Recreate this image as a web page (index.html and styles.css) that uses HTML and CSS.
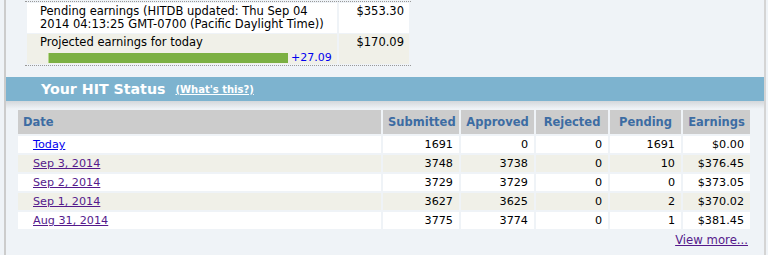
FILE: index.html
```html
<!DOCTYPE html>
<html>
<head>
  <link rel="stylesheet" href="styles.css">
</head>
<body>
  <div class="panel">
    <table class="earnings">
      <tr>
        <td class="label">Pending earnings (HITDB updated: Thu Sep 04<br>2014 04:13:25 GMT-0700 (Pacific Daylight Time))</td>
        <td class="amount">$353.30</td>
      </tr>
      <tr class="alt">
        <td class="label">
          Projected earnings for today
          <div class="progress">
            <span class="bar" style="width: 240px;"></span>
            <span class="delta">+27.09</span>
          </div>
        </td>
        <td class="amount">$170.09</td>
      </tr>
    </table>

    <div class="hit-bar">
      <span class="hit-title">Your HIT Status</span>
      <a href="#" class="hit-help">(What's this?)</a>
    </div>

    <div class="hit-body">
      <table class="status">
        <tr>
          <th class="c-date">Date</th>
          <th class="c-sub">Submitted</th>
          <th class="c-app">Approved</th>
          <th class="c-rej">Rejected</th>
          <th class="c-pen">Pending</th>
          <th class="c-earn">Earnings</th>
        </tr>
        <tr>
          <td class="date"><a href="#" class="today">Today</a></td>
          <td>1691</td><td>0</td><td>0</td><td>1691</td><td>$0.00</td>
        </tr>
        <tr class="alt">
          <td class="date"><a href="#">Sep 3, 2014</a></td>
          <td>3748</td><td>3738</td><td>0</td><td>10</td><td>$376.45</td>
        </tr>
        <tr>
          <td class="date"><a href="#">Sep 2, 2014</a></td>
          <td>3729</td><td>3729</td><td>0</td><td>0</td><td>$373.05</td>
        </tr>
        <tr class="alt">
          <td class="date"><a href="#">Sep 1, 2014</a></td>
          <td>3627</td><td>3625</td><td>0</td><td>2</td><td>$370.02</td>
        </tr>
        <tr>
          <td class="date"><a href="#">Aug 31, 2014</a></td>
          <td>3775</td><td>3774</td><td>0</td><td>1</td><td>$381.45</td>
        </tr>
      </table>
      <div class="more"><a href="#">View more...</a></div>
    </div>
  </div>
</body>
</html>
```

FILE: styles.css
```css
html, body {
  margin: 0;
  background-color: #eff3f7;
  font-family: "DejaVu Sans", Verdana, sans-serif;
  color: #000;
}
.panel {
  margin: 0 2px 0 4px;
  height: 255px;
  border-left: 2px solid #cccccc;
  border-right: 2px solid #d4d4d4;
  background-color: #eff3f7;
  overflow: hidden;
}
.earnings {
  margin: 1px 0 0 19px;
  width: 386px;
  border-collapse: separate;
  border-spacing: 2px 1px;
  border-top: 1px dotted #999;
  border-bottom: 1px dotted #999;
  font-size: 11.5px;
}
.earnings td {
  vertical-align: top;
  background-color: #ffffff;
  line-height: 13px;
  height: 30px;
  padding: 2px 5px 0 13px;
  box-sizing: border-box;
}
.earnings tr.alt td {
  background-color: #f0f0e8;
}
.earnings td.amount {
  text-align: right;
  padding-right: 5px;
  width: 75px;
}
.progress {
  display: flex;
  align-items: center;
  margin: 2px 0 0 8px;
}
.bar {
  display: block;
  height: 10px;
  background-color: #7cb042;
  border-left: 1px solid #b9d88f;
  box-sizing: border-box;
}
.delta {
  color: #0000ee;
  margin-left: 3px;
  font-size: 11px;
}
.hit-bar {
  margin: 11px -2px 0 -2px;
  height: 24px;
  background-color: #7db3cf;
  padding-left: 37px;
  display: flex;
  align-items: center;
}
.hit-title {
  color: #ffffff;
  font-weight: bold;
  font-size: 14.2px;
}
.hit-help {
  color: #ffffff;
  font-weight: bold;
  font-size: 10px;
  margin-left: 10px;
}
.hit-body {
  padding-top: 7px;
  background: linear-gradient(#d3d7db, #eff3f7 8px);
}
.status {
  margin-left: 10px;
  width: 736px;
  table-layout: fixed;
  border-collapse: separate;
  border-spacing: 2px;
  font-size: 11.2px;
}
.status th {
  background-color: #cccccc;
  color: #3d6ca3;
  font-size: 11.5px;
  font-weight: bold;
  height: 24px;
  padding: 0 5px;
  text-align: center;
  box-sizing: border-box;
}
.status th.c-date { text-align: left; width: 363px; }
.status th.c-sub { width: 76px; }
.status th.c-app { width: 73px; }
.status th.c-rej { width: 72px; }
.status th.c-pen { width: 71px; }
.status th.c-earn { width: 67px; }
.status td {
  background-color: #ffffff;
  height: 17px;
  padding: 0 6px 0 0;
  text-align: right;
  box-sizing: border-box;
}
.status tr.alt td {
  background-color: #f0f0e8;
}
.status td.date {
  text-align: left;
  padding-left: 15px;
}
.status a {
  color: #551a8b;
}
.status a.today {
  color: #0000ee;
}
.more {
  text-align: right;
  margin: 2px 16px 0 0;
  font-size: 11.7px;
}
.more a {
  color: #551a8b;
}
```
